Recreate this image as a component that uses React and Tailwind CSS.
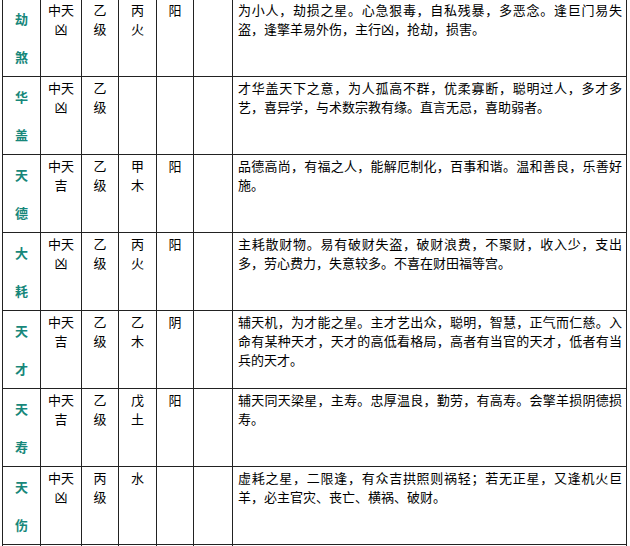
import React from 'react';

// 星曜资料表（截图只显示中间一段，首末两行被裁切）
const rows = [
  {
    name: ['劫', '煞'],
    type: ['中天', '凶'],
    level: ['乙', '级'],
    element: ['丙', '火'],
    yinyang: '阳',
    desc: ['为小人，劫损之星。心急狠毒，自私残暴，多恶念。逢巨门易失', '盗，逢擎羊易外伤，主行凶，抢劫，损害。'],
  },
  {
    name: ['华', '盖'],
    type: ['中天', '凶'],
    level: ['乙', '级'],
    element: [],
    yinyang: '',
    desc: ['才华盖天下之意，为人孤高不群，优柔寡断，聪明过人，多才多', '艺，喜异学，与术数宗教有缘。直言无忌，喜助弱者。'],
  },
  {
    name: ['天', '德'],
    type: ['中天', '吉'],
    level: ['乙', '级'],
    element: ['甲', '木'],
    yinyang: '阳',
    desc: ['品德高尚，有福之人，能解厄制化，百事和谐。温和善良，乐善好', '施。'],
  },
  {
    name: ['大', '耗'],
    type: ['中天', '凶'],
    level: ['乙', '级'],
    element: ['丙', '火'],
    yinyang: '阳',
    desc: ['主耗散财物。易有破财失盗，破财浪费，不聚财，收入少，支出', '多，劳心费力，失意较多。不喜在财田福等宫。'],
  },
  {
    name: ['天', '才'],
    type: ['中天', '吉'],
    level: ['乙', '级'],
    element: ['乙', '木'],
    yinyang: '阴',
    desc: ['辅天机，为才能之星。主才艺出众，聪明，智慧，正气而仁慈。入', '命有某种天才，天才的高低看格局，高者有当官的天才，低者有当', '兵的天才。'],
  },
  {
    name: ['天', '寿'],
    type: ['中天', '吉'],
    level: ['乙', '级'],
    element: ['戊', '土'],
    yinyang: '阳',
    desc: ['辅天同天梁星，主寿。忠厚温良，勤劳，有高寿。会擎羊损阴德损', '寿。'],
  },
  {
    name: ['天', '伤'],
    type: ['中天', '凶'],
    level: ['丙', '级'],
    element: ['水'],
    yinyang: '',
    desc: ['虚耗之星，二限逢，有众吉拱照则祸轻；若无正星，又逢机火巨', '羊，必主官灾、丧亡、横祸、破财。'],
  },
];

const cell = 'border border-[#222] align-top pt-[1px] text-center';

function Lines({ items }) {
  return items.map((t, i) => <div key={i}>{t}</div>);
}

export default function App() {
  return (
    <div
      className="bg-white w-[630px] h-[546px] overflow-hidden pl-[2px] text-[13px] leading-[19px] text-black"
      style={{ fontFamily: '"Noto Sans CJK SC", "Noto Sans", sans-serif' }}
    >
      <table className="table-fixed border-collapse w-[625px] -mt-[2px]">
        <colgroup>
          <col className="w-[38px]" />
          <col className="w-[41px]" />
          <col className="w-[37px]" />
          <col className="w-[38px]" />
          <col className="w-[37px]" />
          <col className="w-[39px]" />
          <col />
        </colgroup>
        <tbody>
          {rows.map((r, i) => (
            <tr key={i} className="h-[78px]">
              <td className="border border-[#222] align-middle text-center font-bold text-[#17877a]">
                <div>{r.name[0]}</div>
                <div>&nbsp;</div>
                <div>{r.name[1]}</div>
              </td>
              <td className={cell}><Lines items={r.type} /></td>
              <td className={cell}><Lines items={r.level} /></td>
              <td className={cell}><Lines items={r.element} /></td>
              <td className={cell}>{r.yinyang}</td>
              <td className={cell}></td>
              <td className="border border-[#222] align-top pt-[1px] pl-[5px] pr-[4px]">
                {r.desc.map((line, j) => (
                  <div
                    key={j}
                    className={
                      j < r.desc.length - 1
                        ? 'whitespace-nowrap text-justify [text-align-last:justify]'
                        : 'whitespace-nowrap'
                    }
                  >
                    {line}
                  </div>
                ))}
              </td>
            </tr>
          ))}
          {/* 下一行只露出边框 */}
          <tr className="h-[20px]">
            <td className="border border-[#222]"></td>
            <td className="border border-[#222]"></td>
            <td className="border border-[#222]"></td>
            <td className="border border-[#222]"></td>
            <td className="border border-[#222]"></td>
            <td className="border border-[#222]"></td>
            <td className="border border-[#222]"></td>
          </tr>
        </tbody>
      </table>
    </div>
  );
}
